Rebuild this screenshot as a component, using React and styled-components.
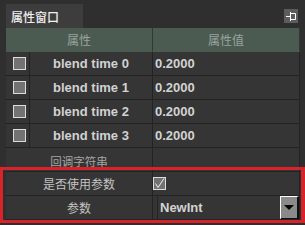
import React from 'react';
import styled, { createGlobalStyle } from 'styled-components';

const Global = createGlobalStyle`
  body {
    margin: 0;
    background: #2f2f2f;
  }
`;

const rows = [
    { name: 'blend time 0', value: '0.2000' },
    { name: 'blend time 1', value: '0.2000' },
    { name: 'blend time 2', value: '0.2000' },
    { name: 'blend time 3', value: '0.2000' },
];

const Panel = styled.div`
    position: relative;
    width: 305px;
    height: 225px;
    overflow: hidden;
    background: #2f2f2f;
    font-family: "Liberation Sans", "Noto Sans CJK SC", sans-serif;
`;

const TitleBar = styled.div`
    display: flex;
    justify-content: space-between;
    align-items: flex-start;
    height: 28px;
    box-sizing: border-box;
    padding: 4px 7px 0 6px;
`;

const Tab = styled.div`
    display: flex;
    align-items: center;
    width: 77px;
    height: 24px;
    box-sizing: border-box;
    padding-left: 5px;
    background: #3d3d3d;
    color: #f0f0f0;
    font-size: 12px;
    font-weight: 500;
`;

const PinButton = styled.div`
    width: 14px;
    height: 14px;
    margin-top: 5px;
    background: #5c5c5c;
    svg{
        display: block;
    }
`;

const Table = styled.div`
    margin-left: 6px;
    width: 294px;
`;

const Row = styled.div`
    display: grid;
    grid-template-columns: 24px 123px 147px;
    height: 24px;
    background: ${p => p.$header ? '#4b5b52' : '#353535'};
`;

const Cell = styled.div`
    grid-column: span ${p => p.$span || 1};
    display: flex;
    align-items: center;
    justify-content: ${p => p.$left ? 'flex-start' : 'center'};
    box-sizing: border-box;
    padding-left: ${p => p.$pad || 0}px;
    padding-top: ${p => p.$top || 0}px;
    border-right: 1px solid ${p => p.$header ? '#2f3a34' : '#232323'};
    border-bottom: 1px solid ${p => p.$header ? '#4b5b52' : '#232323'};
    color: ${p => p.$color || '#d2d2d2'};
    font-size: ${p => p.$size || 13}px;
    font-weight: ${p => p.$bold ? 700 : 400};
    white-space: nowrap;
    overflow: hidden;
`;

const Check = styled.div`
    width: 13px;
    height: 13px;
    box-sizing: border-box;
    border: 1px solid #dcdcdc;
    background: #727272;
    svg{
        display: block;
    }
`;

const Combo = styled.div`
    flex: 1;
    align-self: stretch;
    display: flex;
    align-items: center;
    justify-content: space-between;
    margin-left: 4px;
    border-left: 1px solid #262626;
    color: #d2d2d2;
    font-size: 13px;
    font-weight: 700;
    span{
        padding-left: 2px;
    }
`;

const DropButton = styled.div`
    display: flex;
    align-items: center;
    justify-content: center;
    width: 19px;
    height: 24px;
    box-sizing: border-box;
    background: #8a8a8a;
    border-top: 1px solid #ffffff;
    border-left: 1px solid #ffffff;
    border-right: 2px solid #111;
    border-bottom: 2px solid #111;
    svg{
        display: block;
        margin-right: 1px;
    }
`;

const Highlight = styled.div`
    position: absolute;
    left: 0;
    top: 167px;
    width: 305px;
    height: 56px;
    box-sizing: border-box;
    border: 3px solid #d9232b;
    border-right-width: 4px;
    pointer-events: none;
`;

const PinIcon = () => (
    <svg width="14" height="14" viewBox="0 0 14 14">
        <path d="M2 7.5H6.5M6.5 3V12M6.5 4.5H11.5V10.5H6.5" stroke="#fff" strokeWidth="1" fill="none" />
    </svg>
);

const CheckBox = ({ checked }) => (
    <Check>
        {checked ? (
            <svg width="11" height="11" viewBox="0 0 11 11">
                <polyline points="1.5,5.5 4,9.5 10,0.5" stroke="#f0f0f0" strokeWidth="1" fill="none" />
            </svg>
        ) : null}
    </Check>
);

const App = () => {
    return (
        <>
            <Global />
            <Panel>
                <TitleBar>
                    <Tab>属性窗口</Tab>
                    <PinButton><PinIcon /></PinButton>
                </TitleBar>
                <Table>
                    <Row $header>
                        <Cell $header $span={2} $size={12} $color='#97a39c'>属性</Cell>
                        <Cell $header $size={12} $color='#97a39c'>属性值</Cell>
                    </Row>
                    {rows.map((r, i) => (
                        <Row key={i}>
                            <Cell $left $pad={7}><CheckBox /></Cell>
                            <Cell $bold>{r.name}</Cell>
                            <Cell $left $pad={2} $bold>{r.value}</Cell>
                        </Row>
                    ))}
                    <Row>
                        <Cell $span={2} $size={11.5} $top={3} $color='#a6a6a6'>回调字符串</Cell>
                        <Cell />
                    </Row>
                    <Row>
                        <Cell $span={2} $size={12} $color='#c4c4c4'>是否使用参数</Cell>
                        <Cell $left><CheckBox checked /></Cell>
                    </Row>
                    <Row>
                        <Cell $span={2} $size={12} $color='#c4c4c4'>参数</Cell>
                        <Cell $left>
                            <Combo>
                                <span>NewInt</span>
                                <DropButton>
                                    <svg width="10" height="5" viewBox="0 0 10 5">
                                        <polygon points="0,0 10,0 5,5" fill="#000" />
                                    </svg>
                                </DropButton>
                            </Combo>
                        </Cell>
                    </Row>
                </Table>
                <Highlight />
            </Panel>
        </>
    );
};

export default App;
